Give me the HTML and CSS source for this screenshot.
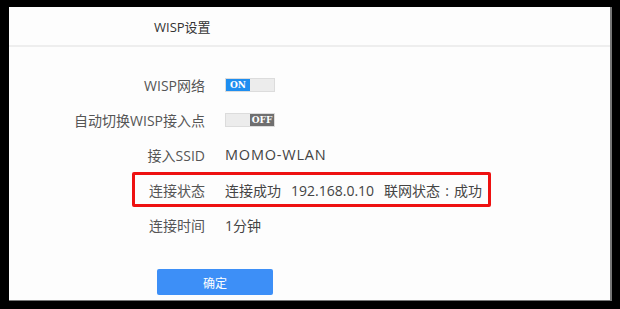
FILE: index.html
```html
<!DOCTYPE html>
<html lang="zh-CN">
<head>
  <meta charset="UTF-8">
  <title>WISP设置</title>
  <link rel="stylesheet" href="styles.css">
</head>
<body>
  <div class="panel">
    <div class="header">WISP设置</div>

    <div class="form">
      <div class="row">
        <span class="label">WISP网络</span>
        <span class="switch on"><span class="knob">ON</span></span>
      </div>
      <div class="row">
        <span class="label">自动切换WISP接入点</span>
        <span class="switch off"><span class="knob">OFF</span></span>
      </div>
      <div class="row">
        <span class="label">接入SSID</span>
        <span class="value ssid">MOMO-WLAN</span>
      </div>
      <div class="row highlight">
        <span class="label">连接状态</span>
        <span class="value"><span class="part">连接成功</span><span class="part">192.168.0.10</span>联网状态<span class="colon">:</span>成功</span>
      </div>
      <div class="row">
        <span class="label">连接时间</span>
        <span class="value">1分钟</span>
      </div>
    </div>

    <button class="btn">确定</button>
  </div>
</body>
</html>
```

FILE: styles.css
```css
body {
  margin: 0;
  background: #000;
  font-family: "Open Sans", "Noto Sans CJK SC", sans-serif;
  width: 620px;
  height: 309px;
  overflow: hidden;
}

.panel {
  margin: 7px 8px 0 9px;
  height: 294px;
  background: #fdfdfd;
  border-right: 2px solid #777;
  border-bottom: 1px solid #777;
  box-sizing: border-box;
}

.header {
  height: 38px;
  line-height: 40px;
  padding-left: 145px;
  font-size: 13px;
  color: #333;
  border-bottom: 2px solid #eeeeee;
}

.form {
  padding-top: 20px;
}

.row {
  display: flex;
  align-items: center;
  height: 35px;
  font-size: 14px;
  color: #555;
  position: relative;
}

.label {
  width: 196px;
  text-align: right;
  margin-right: 20px;
}

.value {
  color: #444;
}

.ssid {
  font-size: 14.5px;
  letter-spacing: 0.8px;
}

.part {
  margin-right: 10px;
}

.colon {
  display: inline-block;
  width: 14px;
  text-align: center;
}

.highlight::after {
  content: "";
  position: absolute;
  left: 123px;
  top: 0;
  width: 359px;
  height: 35px;
  border: 3px solid #ee1111;
  border-radius: 2px;
  box-sizing: border-box;
}

.switch {
  display: flex;
  width: 48px;
  height: 12px;
  background: #ececec;
  border: 1px solid #dcdcdc;
}

.switch.off {
  justify-content: flex-end;
}

.knob {
  width: 24px;
  height: 12px;
  line-height: 12px;
  text-align: center;
  color: #fff;
  font-family: "DejaVu Serif", serif;
  font-weight: bold;
  font-size: 9px;
}

.on .knob {
  background: #1e8ef0;
}

.off .knob {
  background: #6f6f6f;
}

.btn {
  display: block;
  margin: 27px 0 0 148px;
  width: 116px;
  height: 26px;
  border: none;
  border-radius: 2px;
  background: #3d8ff7;
  color: #fff;
  font-family: "Noto Sans CJK SC", sans-serif;
  font-size: 12px;
}
```
